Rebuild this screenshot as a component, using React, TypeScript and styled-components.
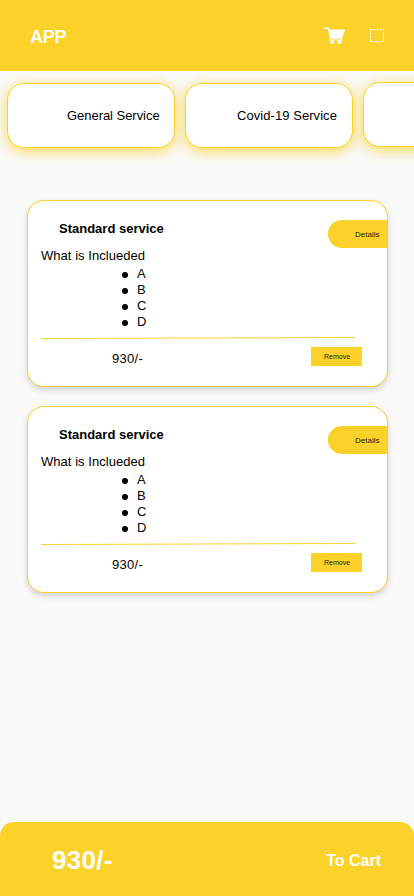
import React from "react";
import styled, { createGlobalStyle } from "styled-components";

const YELLOW = "#fcd12a";

const GlobalStyle = createGlobalStyle`
  * { box-sizing: border-box; }
  html, body { margin: 0; padding: 0; overflow: hidden; }
  body {
    background: #f9f9f9;
    font-family: "Liberation Sans", Arial, sans-serif;
    font-size: 13px;
    color: #000;
  }
  button { font-family: inherit; border: 0; padding: 0; margin: 0; }
`;

const Screen = styled.div`
  display: flex;
  flex-direction: column;
  width: 414px;
  height: 896px;
  background: #f9f9f9;
  overflow: hidden;
`;

const Header = styled.header`
  display: flex;
  align-items: center;
  flex: none;
  height: 71px;
  padding: 2px 30px 0;
  background: ${YELLOW};
`;

const Logo = styled.h1`
  flex: 1;
  margin: 0;
  font-size: 18px;
  line-height: 20px;
  letter-spacing: -0.2px;
  color: #fff;
`;

const CartIcon = styled.svg`
  display: block;
  width: 22px;
  height: 18px;
  margin: -2px 24px 0 0;
`;

const PlaceholderIcon = styled.svg`
  display: block;
  width: 14px;
  height: 13px;
  margin-top: -2px;
`;

const Tabs = styled.nav`
  display: flex;
  flex: none;
  gap: 10px;
  height: 129px;
  padding: 12px 0 0 7px;
  overflow: hidden;
`;

const Tab = styled.button<{ $inset: number; $raised?: boolean }>`
  flex: none;
  width: 168px;
  height: 65px;
  margin-top: ${(p) => (p.$raised ? "-1px" : "0")};
  padding: 0 0 0 ${(p) => p.$inset}px;
  border: 1px solid ${YELLOW};
  border-radius: 17px;
  background: #fff;
  box-shadow: 0 3px 14px rgba(252, 209, 42, 0.85);
  font-size: 13px;
  text-align: left;
  white-space: nowrap;
  color: #000;
`;

const TabLabel = styled.span<{ $spacing: number }>`
  letter-spacing: ${(p) => p.$spacing}px;
`;

const CardList = styled.main`
  display: flex;
  flex: 1;
  flex-direction: column;
  gap: 19px;
  padding: 0 26px 0 27px;
`;

const Card = styled.article`
  display: flex;
  flex-direction: column;
  height: 187px;
  border: 1px solid ${YELLOW};
  border-radius: 17px;
  background: #fff;
  box-shadow: 0 3px 6px rgba(0, 0, 0, 0.16);
`;

const CardHead = styled.div`
  display: flex;
  justify-content: space-between;
  height: 47px;
  padding: 19px 0 0 31px;
`;

const CardTitle = styled.h2`
  margin: 1px 0 0;
  font-size: 13px;
  line-height: 16px;
`;

const DetailsButton = styled.button`
  width: 59px;
  height: 28px;
  padding: 0 7.5px 0 0;
  border-radius: 14px 0 0 14px;
  background: ${YELLOW};
  font-size: 8px;
  text-align: right;
  color: #2b2407;
`;

const Included = styled.p`
  margin: 0 0 2px 13px;
  font-size: 13px;
  line-height: 16px;
  letter-spacing: 0.04px;
`;

const Features = styled.ul`
  display: flex;
  flex-direction: column;
  margin: 0 0 0 94px;
  padding: 0;
  list-style: none;
`;

const Feature = styled.li`
  display: flex;
  align-items: center;
  gap: 9px;
  height: 16px;
  line-height: 16px;

  &::before {
    content: "";
    width: 6px;
    height: 6px;
    margin-top: 2px;
    border-radius: 50%;
    background: #000;
  }
`;

const Divider = styled.svg`
  display: block;
  flex: none;
  width: 316px;
  height: 3px;
  margin: 6px 0 0 13px;
`;

const CardFoot = styled.div`
  display: flex;
  justify-content: space-between;
  padding: 8px 25px 0 84px;
`;

const Price = styled.span`
  margin-top: 4px;
  font-size: 13px;
  line-height: 16px;
  letter-spacing: 0.3px;
`;

const RemoveButton = styled.button`
  width: 51px;
  height: 19px;
  padding-left: 1px;
  background: ${YELLOW};
  font-size: 7px;
  text-align: center;
  color: #2b2407;
`;

const Footer = styled.footer`
  display: flex;
  flex: none;
  align-items: center;
  justify-content: space-between;
  height: 74px;
  padding: 3px 33px 0 52px;
  border-radius: 14px 14px 0 0;
  background: ${YELLOW};
  font-weight: bold;
  color: #fff;
`;

const Total = styled.span`
  margin-top: -1px;
  font-size: 26px;
  line-height: 30px;
  letter-spacing: 0.3px;
`;

const ToCart = styled.button`
  background: none;
  font-size: 16px;
  font-weight: bold;
  color: #fff;
`;

const features = ["A", "B", "C", "D"];

function ServiceCard() {
  return (
    <Card>
      <CardHead>
        <CardTitle>Standard service</CardTitle>
        <DetailsButton>Details</DetailsButton>
      </CardHead>
      <Included>What is Inclueded</Included>
      <Features>
        {features.map((name) => (
          <Feature key={name}>{name}</Feature>
        ))}
      </Features>
      <Divider viewBox="0 0 316 3">
        <path d="M.5 2.5 L314.5 1.5" stroke={YELLOW} strokeWidth="1" />
      </Divider>
      <CardFoot>
        <Price>930/-</Price>
        <RemoveButton>Remove</RemoveButton>
      </CardFoot>
    </Card>
  );
}

export default function App() {
  return (
    <>
      <GlobalStyle />
      <Screen>
        <Header>
          <Logo>APP</Logo>
          <CartIcon viewBox="0 0 22 18" fill="#fff">
            <path d="M0 .4H4.7L5.4 2.5H21.2L18 11.3H6.2L3.9 2H0Z" />
            <path d="M5.4 10.2H18.8V13.5H5.2Z" fillOpacity=".55" />
            <circle cx="8.2" cy="15" r="2.1" />
            <circle cx="15.6" cy="15" r="2.1" />
          </CartIcon>
          <PlaceholderIcon viewBox="0 0 14 13">
            <rect x=".5" y=".5" width="13" height="12" fill="none" stroke="#fff" strokeDasharray="2 1" />
          </PlaceholderIcon>
        </Header>
        <Tabs>
          <Tab $inset={59}><TabLabel $spacing={-0.04}>General Service</TabLabel></Tab>
          <Tab $inset={51}><TabLabel $spacing={0.06}>Covid-19 Service</TabLabel></Tab>
          <Tab $inset={59} $raised />
        </Tabs>
        <CardList>
          <ServiceCard />
          <ServiceCard />
        </CardList>
        <Footer>
          <Total>930/-</Total>
          <ToCart>To Cart</ToCart>
        </Footer>
      </Screen>
    </>
  );
}
